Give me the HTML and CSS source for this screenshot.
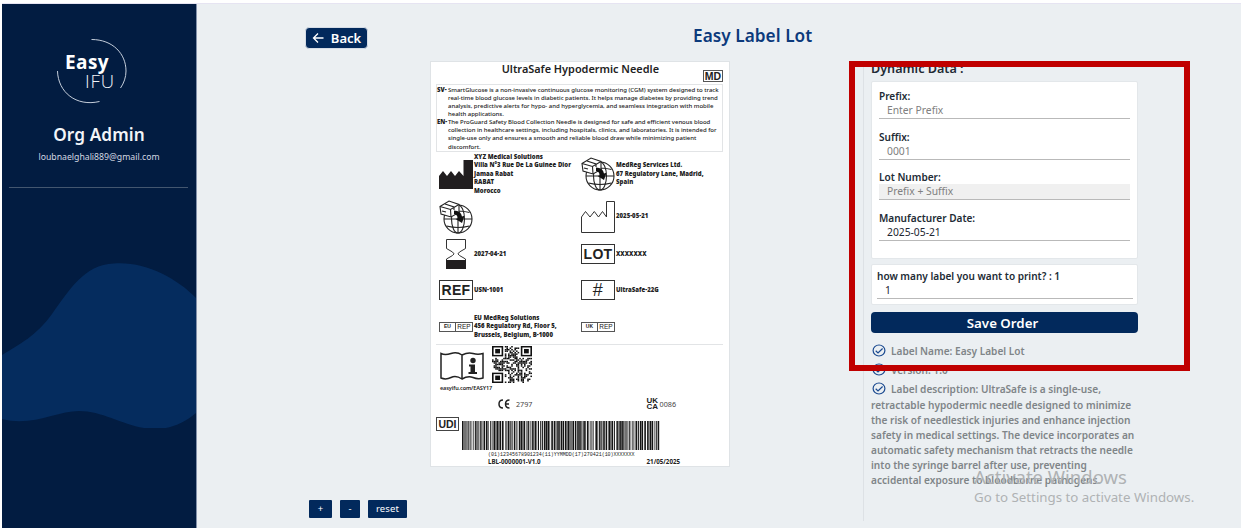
FILE: index.html
```html
<!DOCTYPE html>
<html lang="en">
<head>
<meta charset="utf-8">
<title>Easy Label Lot</title>
<link rel="stylesheet" href="styles.css">
</head>
<body>
<svg class="defs" width="0" height="0">
  <symbol id="globe" viewBox="0 0 34 34">
    <g fill="none" stroke="#222" stroke-width="1.1">
      <circle cx="19" cy="19" r="14"/><ellipse cx="19" cy="19" rx="6.5" ry="14"/>
      <path d="M19 5v28M5 19h28M7.5 12.5q11.500-3 23 0M7.500 26q11.500 3 23 0"/>
      <path fill="#fff" d="M1 6.500 10 1l10 3.500v8L12 17 2 14z"/>
      <path d="M1 6.500l10.500 3L20 4.500M11.500 9.500 12 17M6 4l9 3v3M3 11l4 1"/>
    </g>
    <path fill="#111" d="M15 10.500q7 0 8 6l2.500-.8L23 23l-6.500-4 2.500-.8q-.5-3.500-4-4.200z"/>
  </symbol>
  <symbol id="check" viewBox="0 0 14 13">
    <ellipse cx="7" cy="6.500" rx="5.900" ry="5.500" fill="none" stroke="#1b4a90" stroke-width="1.2"/>
    <path d="M3.700 6.800 6 9l4.600-4.500" fill="none" stroke="#1b4a90" stroke-width="1.200"/>
  </symbol>
</svg>
<div class="app">
  <aside class="sidebar">
    <svg class="wave" viewBox="0 0 194 166" width="194" height="166"><path fill="#052c5e" d="M0 93C18 82 34 74 50 52C66 30 82 2 112 1.500C142-1 175 16 194 36V151C180 163 166 167 152 167C124 166 103 149 77 149C55 149 30 165 0 157Z"/></svg>
    <div class="logo">
      <svg class="ring" viewBox="0 0 72 66" width="72" height="66"><g fill="none" stroke="#c5cedb" stroke-width="1"><path d="M35.500 1.500C57 1.500 70 16 70 33C70 39 68 45 64.500 50"/><path d="M1.500 33C2 54 20 69 43.500 63.500"/></g></svg>
      <b>Easy</b><span>IFU</span>
    </div>
    <h2 class="role">Org Admin</h2>
    <p class="mail">loubnaelghali889@gmail.com</p>
    <hr class="rule">
  </aside>
  <main class="main">
    <header class="top">
      <button class="back"><svg viewBox="0 0 12 12" width="12" height="12"><path d="M11.500 6H1.500M6 1.500 1.500 6 6 10.500" fill="none" stroke="#fff" stroke-width="1.300"/></svg>Back</button>
      <h1 class="title">Easy Label Lot</h1>
    </header>
    <section class="label">
      <div class="label-head"><h3>UltraSafe Hypodermic Needle</h3><span class="md">MD</span></div>
      <div class="desc">
        <p><b>SV-</b>SmartGlucose is a non-invasive continuous glucose monitoring (CGM) system designed to track<br>real-time blood glucose levels in diabetic patients. It helps manage diabetes by providing trend<br>analysis, predictive alerts for hypo- and hyperglycemia, and seamless integration with mobile<br>health applications.</p>
        <p><b>EN-</b>The ProGuard Safety Blood Collection Needle is designed for safe and efficient venous blood<br>collection in healthcare settings, including hospitals, clinics, and laboratories. It is intended for<br>single-use only and ensures a smooth and reliable blood draw while minimizing patient<br>discomfort.</p>
      </div>
      <div class="facts">
        <div class="fact"><svg width="34" height="30" viewBox="0 0 34 30"><path fill="#211e1f" d="M0 30V17L4 12l4 5 4-5 4 5 4-5 4.500 5V1H34V30z"/></svg><p>XYZ Medical Solutions<br>Villa N°3 Rue De La Guinee Dior<br>Jamaa Rabat<br>RABAT<br>Morocco</p></div>
        <div class="fact"><svg width="34" height="34"><use href="#globe"/></svg><p>MedReg Services Ltd.<br>67 Regulatory Lane, Madrid,<br>Spain</p></div>
        <div class="fact"><svg width="34" height="34"><use href="#globe"/></svg></div>
        <div class="fact"><svg width="34" height="34" viewBox="0 0 34 34"><path fill="none" stroke="#333" d="M.5 32.500V17L4.500 11.500 9 17l4.300-5.500L17.500 17l4-5.500L25.500 17V1.500h8v31z"/></svg><p>2025-05-21</p></div>
        <div class="fact"><svg width="34" height="30" viewBox="0 0 34 30"><path fill="none" stroke="#333" d="M7.500.5h19v9L20.500 13q-3 2 0 3.500L26.500 20v9h-19v-9l6-3.500q3-1.500 0-3.500l-6-3.500z"/><path fill="#211e1f" d="M7 21h20v9H7z"/></svg><p>2027-04-21</p></div>
        <div class="fact"><span class="tag">LOT</span><p>XXXXXXX</p></div>
        <div class="fact"><span class="tag">REF</span><p>USN-1001</p></div>
        <div class="fact"><span class="tag hash">#</span><p>UltraSafe-22G</p></div>
        <div class="fact"><span class="rep"><b>EU</b><i>REP</i></span><p>EU MedReg Solutions<br>456 Regulatory Rd, Floor 5,<br>Brussels, Belgium, B-1000</p></div>
        <div class="fact"><span class="rep"><b>UK</b><i>REP</i></span></div>
      </div>
      <div class="codes">
        <svg class="book" width="44" height="30" viewBox="0 0 44 30"><path fill="none" stroke="#222" stroke-width="1.500" d="M22 4Q17 .5 11 2.500T1 2.500V27Q6 29 11 26.500T22 28Q28 24.500 33 26.500T43 27V2.500Q38 4 33 2.500T22 4zV28"/><circle cx="33" cy="9.500" r="2.700" fill="#222"/><path fill="#222" d="M29 13.500h6V21h2v2h-8.500v-2h2v-5.500H29z"/></svg>
        <svg id="qr" width="40" height="37" viewBox="0 0 25 25" preserveAspectRatio="none"></svg>
      </div>
      <p class="url">easyifu.com/EASY17</p>
      <div class="marks">
        <span class="mark"><svg width="12" height="10" viewBox="0 0 12 10"><path fill="none" stroke="#222" stroke-width="1.500" d="M5 1Q1 1 1 5t4 4M11.500 1Q7.500 1 7.500 5t4 4M7.500 5H11"/></svg>2797</span>
        <span class="mark ukca"><b>UK<br>CA</b>0086</span>
      </div>
      <div class="udi"><span class="udi-tag">UDI</span><svg id="bars" width="198" height="29" viewBox="0 0 198 29"></svg></div>
      <p class="gs1">(01)12345678901234(11)YYMMDD(17)270421(10)XXXXXXX</p>
      <div class="foot"><span>LBL-0000001-V1.0</span><span>21/05/2025</span></div>
    </section>
    <div class="zoom"><button>+</button><button>-</button><button>reset</button></div>
    <section class="panel">
      <h3 class="panel-title">Dynamic Data :</h3>
      <div class="card">
        <label>Prefix:</label><div class="field muted">Enter Prefix</div>
        <label>Suffix:</label><div class="field muted">0001</div>
        <label>Lot Number:</label><div class="field muted disabled">Prefix + Suffix</div>
        <label>Manufacturer Date:</label><div class="field">2025-05-21</div>
      </div>
      <div class="card count"><label>how many label you want to print? : 1</label><div class="field">1</div></div>
      <button class="save">Save Order</button>
      <ul class="info">
        <li><svg width="14" height="13"><use href="#check"/></svg>Label Name: Easy Label Lot</li>
        <li><svg width="14" height="13"><use href="#check"/></svg>Version: 1.0</li>
        <li><svg width="14" height="13"><use href="#check"/></svg>Label description: UltraSafe is a single-use,</li>
      </ul>
      <p class="info-text">retractable hypodermic needle designed to minimize<br>the risk of needlestick injuries and enhance injection<br>safety in medical settings. The device incorporates an<br>automatic safety mechanism that retracts the needle<br>into the syringe barrel after use, preventing<br>accidental exposure to bloodborne pathogens.</p>
    </section>
  </main>
</div>
<div class="highlight"></div>
<div class="watermark"><p class="w1">Activate Windows</p><p class="w2">Go to Settings to activate Windows.</p></div>
<script src="codes.js"></script>
</body>
</html>
```
FILE: styles.css
```css
* { box-sizing: border-box; margin: 0; padding: 0; }
body { background: #fff; font-family: "Noto Sans", "Open Sans", sans-serif; color: #222b35; overflow: hidden; }
.defs { position: absolute; }
button { font-family: inherit; border: 0; color: #fff; background: #02295c; }
svg { flex: none; display: block; }
p, h1, h2, h3, label, li, button { white-space: nowrap; }

.app { display: flex; width: 1239px; height: 525px; margin: 3px 0 0 2px; background: #ebeff2; border-top: 1px solid #e6e4f2; }

.sidebar { position: relative; width: 195px; background: #021c41; border-right: 1px solid #8391aa; display: flex; flex-direction: column; align-items: center; color: #f3f5f8; }
.wave { position: absolute; left: 0; top: 258px; }
.logo { position: relative; width: 72px; height: 66px; margin: 34px 14px 0 0; padding: 14px 0 0 9px; display: flex; flex-direction: column; font-family: "Open Sans", sans-serif; }
.ring { position: absolute; left: 0; top: 0; }
.logo b { font-size: 19px; line-height: 20px; letter-spacing: .4px; font-weight: 700; color: #fff; }
.logo span { font-size: 18.500px; line-height: 18px; margin-left: 20px; font-weight: 300; letter-spacing: .9px; }
.role { font-size: 17.200px; line-height: 22px; font-weight: 600; margin-top: 20px; letter-spacing: .1px; }
.mail { font-size: 8.700px; line-height: 12px; margin-top: 5px; color: #d3d9e2; }
.rule { width: 179px; border: 0; border-top: 1px solid #43566f; margin-top: 24px; margin-right: 1px; }

.main { flex: 1; display: grid; grid-template-columns: 233px 300px 133px 1fr; grid-template-rows: 57px 406px 1fr; }
.top { grid-column: 1 / -1; display: flex; align-items: flex-start; }
.back { margin: 23px 0 0 108px; width: 63px; height: 22px; border-radius: 4px; font-size: 13px; font-weight: 600; display: flex; align-items: center; justify-content: center; gap: 7px; border: 1px solid #d5dce6; }
.title { margin: 20px 0 0 325px; font-size: 17.200px; line-height: 24px; font-weight: 600; color: #0c3a7c; letter-spacing: .05px; }

.label { grid-column: 2; grid-row: 2; background: #fff; border: 1px solid #dfe3e6; padding: 0 6px 0 5px; display: flex; flex-direction: column; color: #222; }
.label-head { height: 22px; display: flex; justify-content: flex-end; }
.label-head h3 { font-size: 10.900px; line-height: 13px; font-weight: 600; margin-right: 44px; }
.md { width: 20px; height: 12px; margin-top: 8px; border: 1px solid #555; font: bold 10.500px/10px "Liberation Sans", sans-serif; display: flex; justify-content: center; }
.desc { height: 68px; border: 1px solid #e2e4e6; padding: 1px 0 0 11px; font-size: 6px; line-height: 8.080px; font-weight: 500; letter-spacing: -.02px; }
.desc b { display: inline-block; width: 11px; margin-left: -11px; font-weight: 900; letter-spacing: 0; }
.facts { display: grid; grid-template-columns: 142px 1fr; grid-template-rows: 44px 41px 34px 38px 35px; padding-left: 3px; }
.fact { display: flex; align-items: center; gap: 1px; font-size: 6px; line-height: 8.600px; font-weight: 900; letter-spacing: .03px; }
.tag { width: 34px; height: 20px; border: 1.500px solid #333; font: bold 14px/18px "Liberation Sans", sans-serif; letter-spacing: .3px; display: flex; align-items: center; justify-content: center; }
.hash { font-weight: 400; font-size: 18px; }
.rep { width: 34px; height: 10px; border: 1px solid #555; display: flex; font-family: "Liberation Sans", sans-serif; line-height: 8px; text-align: center; }
.rep b { width: 16px; border-right: 1px solid #555; font-size: 5px; line-height: 7px; }
.rep i { flex: 1; font-style: normal; font-size: 6.500px; font-weight: 500; }
.codes { height: 40px; border-top: 1px solid #e2e4e6; display: flex; padding: 1px 0 0 4px; gap: 8px; }
.book { margin-top: 5px; }
.url { margin-left: 4px; font-size: 5.500px; line-height: 9px; font-weight: 600; letter-spacing: -.1px; }
.marks { height: 22px; margin-bottom: 2px; display: flex; align-items: center; padding: 0 47px 0 62px; justify-content: space-between; font-size: 7.200px; color: #444; }
.mark { display: flex; align-items: center; gap: 6px; }
.ukca { gap: 0; }
.ukca b { font: bold 8px/6px "Liberation Sans", sans-serif; color: #222; width: 13px; }
.udi { display: flex; gap: 3px; height: 35px; }
.udi-tag { width: 23px; height: 14px; border: 1px solid #444; font: bold 10.500px/12px "Liberation Sans", sans-serif; display: flex; justify-content: center; }
#bars { margin-top: 4px; }
.gs1 { font: 5px/7px "Liberation Mono", monospace; margin-left: 52px; letter-spacing: -.01px; }
.foot { display: flex; justify-content: space-between; padding: 0 43px 0 52px; font-size: 6.200px; line-height: 6px; font-weight: 700; }

.zoom { grid-column: 1 / 3; grid-row: 3; display: flex; align-items: flex-start; gap: 8px; padding: 33px 0 0 112px; }
.zoom button { height: 18px; width: 23px; border-radius: 1px; font-size: 9.500px; line-height: 18px; }
.zoom button:nth-child(2) { width: 20px; }
.zoom button:nth-child(3) { width: 39px; letter-spacing: .15px; }

.panel { grid-column: 4; grid-row: 2 / 4; border-left: 1px solid #dde1e5; margin-bottom: 7px; padding-left: 7px; width: 275px; display: flex; flex-direction: column; }
.panel-title { font-size: 12.600px; line-height: 16px; font-weight: 600; margin-bottom: 4px; }
.card { height: 178px; background: #fff; border: 1px solid #e3e7ea; border-radius: 2px; padding: 7px 7px 0; }
.card label { display: block; font-size: 10.050px; line-height: 14px; font-weight: 600; }
.field { height: 16px; padding-left: 8px; font-size: 10.300px; line-height: 15px; border-bottom: 1px solid #b9b9b9; margin-bottom: 10.600px; color: #1d2632; }
.muted { color: #808080; }
.disabled { background: #f0f0f0; }
.count { height: 41px; margin-top: 5px; padding: 4px 4px 0 5px; }
.save { height: 21px; margin-top: 7px; border-radius: 4px; font-size: 13.300px; line-height: 20px; font-weight: 600; padding-right: 4px; }
.info { list-style: none; margin-top: 8px; }
.info li { height: 19.200px; display: flex; align-items: center; gap: 5px; }
.info li svg { margin-left: 1px; }
.info, .info-text { font-size: 10.100px; font-weight: 600; color: #7f8588; }
.info-text { line-height: 15.100px; margin-top: -1px; }

.highlight { position: absolute; left: 849px; top: 61px; width: 341px; height: 310px; border: 6px solid #c00000; }
.watermark { position: absolute; left: 974px; top: 466px; color: #afb2b4; }
.w1 { font-size: 18.500px; line-height: 22px; }
.w2 { font-size: 13.300px; line-height: 19px; }
```
FILE: codes.js
```js
const NS = 'http://www.w3.org/2000/svg';
function rect(svg, x, y, w, h, fill) {
  const r = document.createElementNS(NS, 'rect');
  r.setAttribute('x', x); r.setAttribute('y', y);
  r.setAttribute('width', w); r.setAttribute('height', h);
  r.setAttribute('fill', fill);
  svg.appendChild(r);
}
let seed = 17;
const rnd = () => (seed = (seed * 16807) % 2147483647) / 2147483647;

const qr = document.getElementById('qr');
const corner = (x, y) => (x < 8 && y < 8) || (x > 16 && y < 8) || (x < 8 && y > 16);
for (let y = 0; y < 25; y++)
  for (let x = 0; x < 25; x++)
    if (!corner(x, y) && rnd() < 0.53) rect(qr, x, y, 1, 1, '#111');
for (const [x, y] of [[0, 0], [18, 0], [0, 18]]) {
  rect(qr, x, y, 7, 7, '#111');
  rect(qr, x + 1, y + 1, 5, 5, '#fff');
  rect(qr, x + 2, y + 2, 3, 3, '#111');
}

const bars = document.getElementById('bars');
for (let x = 0; x < 197;) {
  const w = 0.6 + Math.floor(rnd() * 3) * 0.5;
  rect(bars, x, 0, Math.min(w, 198 - x), 29, '#151515');
  x += w + 0.4 + Math.floor(rnd() * 2.3) * 0.4;
}
```
